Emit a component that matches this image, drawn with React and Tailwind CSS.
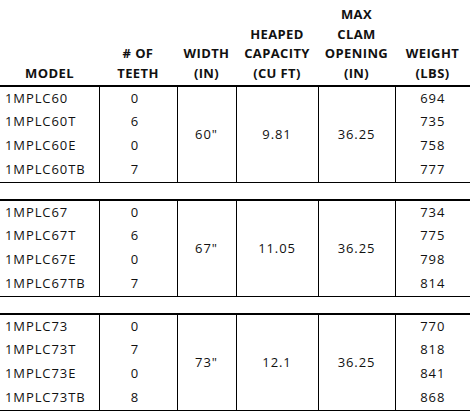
import React from 'react';

const groups = [
  {
    width: '60"',
    capacity: '9.81',
    clam: '36.25',
    rows: [
      ['1MPLC60', '0', '694'],
      ['1MPLC60T', '6', '735'],
      ['1MPLC60E', '0', '758'],
      ['1MPLC60TB', '7', '777'],
    ],
  },
  {
    width: '67"',
    capacity: '11.05',
    clam: '36.25',
    rows: [
      ['1MPLC67', '0', '734'],
      ['1MPLC67T', '6', '775'],
      ['1MPLC67E', '0', '798'],
      ['1MPLC67TB', '7', '814'],
    ],
  },
  {
    width: '73"',
    capacity: '12.1',
    clam: '36.25',
    rows: [
      ['1MPLC73', '0', '770'],
      ['1MPLC73T', '7', '818'],
      ['1MPLC73E', '0', '841'],
      ['1MPLC73TB', '8', '868'],
    ],
  },
];

const Head = ({ lines }) => (
  <th className="align-bottom text-center font-bold pb-[2px] px-0 leading-[19.5px] tracking-[0.03em]">
    {lines.map((l, i) => (
      <div key={i}>{l}</div>
    ))}
  </th>
);

const App = () => {
  return (
    <div className="w-[472px] h-[414px] bg-white text-[#111] font-['Open_Sans',sans-serif] text-[13px] tracking-[0.07em]">
      <table className="w-[470px] border-collapse table-fixed">
        <colgroup>
          <col className="w-[99px]" />
          <col className="w-[78px]" />
          <col className="w-[59px]" />
          <col className="w-[82px]" />
          <col className="w-[77px]" />
          <col className="w-[75px]" />
        </colgroup>
        <thead>
          <tr className="h-[86px]">
            <Head lines={['MODEL']} />
            <Head lines={['# OF', 'TEETH']} />
            <Head lines={['WIDTH', '(IN)']} />
            <Head lines={['HEAPED', 'CAPACITY', '(CU FT)']} />
            <Head lines={['MAX', 'CLAM', 'OPENING', '(IN)']} />
            <Head lines={['WEIGHT', '(LBS)']} />
          </tr>
        </thead>
        {groups.map((g, gi) => (
          <tbody key={gi}>
            {gi > 0 && (
              <tr className="h-[18px]">
                <td colSpan={6} className="p-0"></td>
              </tr>
            )}
            {g.rows.map((r, ri) => (
              <tr
                key={ri}
                className={`h-[24px] ${ri === 0 ? 'border-t-2 border-black' : ''} ${ri === 3 ? 'border-b border-black' : ''}`}
              >
                <td className="p-0 pl-[5px]">{r[0]}</td>
                <td className="text-center p-0 pr-[6px] border-l border-black">{r[1]}</td>
                {ri === 0 && (
                  <>
                    <td rowSpan={4} className="text-center p-0 border-l border-black">{g.width}</td>
                    <td rowSpan={4} className="text-center p-0 border-l border-black">{g.capacity}</td>
                    <td rowSpan={4} className="text-center p-0 border-l border-black">{g.clam}</td>
                  </>
                )}
                <td className="text-center p-0 border-l border-black">{r[2]}</td>
              </tr>
            ))}
          </tbody>
        ))}
      </table>
    </div>
  );
};

export default App;
